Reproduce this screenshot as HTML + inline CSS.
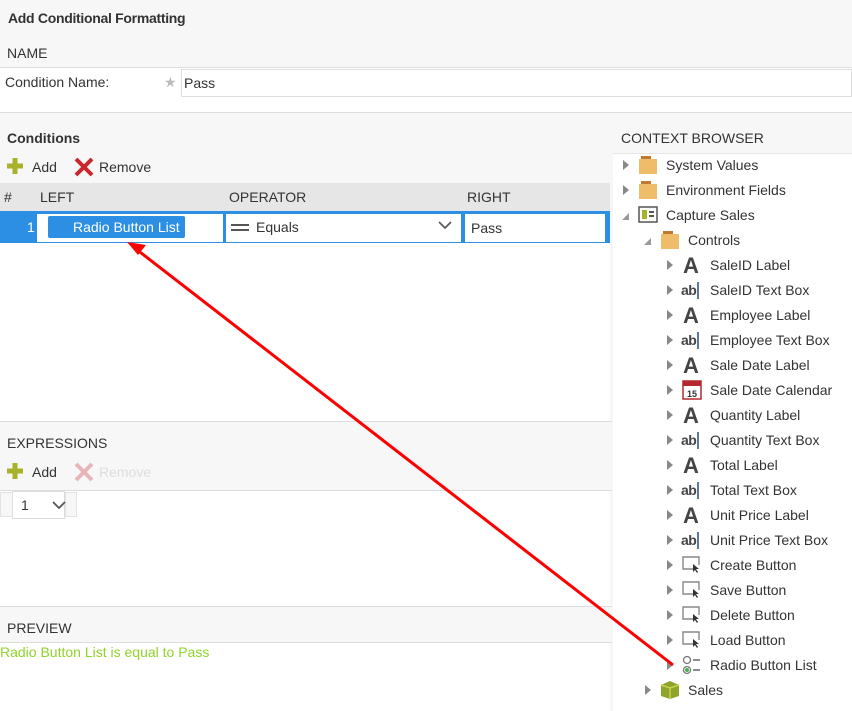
<!DOCTYPE html><html><head><style>
*{margin:0;padding:0;box-sizing:border-box}
body{width:852px;height:711px;position:relative;overflow:hidden;background:#f7f7f7;font-family:"Liberation Sans",sans-serif;font-size:14px;color:#333}
.a{position:absolute;white-space:nowrap}
.w{position:absolute;background:#fff}
.ln{position:absolute;height:1px;background:#ddd}
.t{position:absolute;font-size:14px;color:#333;white-space:nowrap}
.ar{position:absolute;width:0;height:0;border-top:5px solid transparent;border-bottom:5px solid transparent;border-left:6px solid #888}
</style></head><body>
<div class="a" style="left:8px;top:10px;font-weight:bold;font-size:14px;letter-spacing:-0.3px">Add Conditional Formatting</div>
<div class="a" style="left:7px;top:45px">NAME</div>
<div class="ln" style="left:0;top:67px;width:852px"></div>
<div class="w" style="left:0;top:68px;width:852px;height:44px"></div>
<div class="a" style="left:5px;top:74px">Condition Name:</div>
<div class="a" style="left:164px;top:74px;color:#bbb">★</div>
<div class="w" style="left:181px;top:69px;width:671px;height:28px;border:1px solid #ddd"></div>
<div class="a" style="left:184px;top:75px">Pass</div>
<div class="ln" style="left:0;top:112px;width:852px"></div>
<div class="a" style="left:7px;top:130px;font-weight:bold">Conditions</div>
<svg class="a" style="left:6px;top:157px" width="18" height="18"><path d="M9 1v16M1 9h16" stroke="#a8b22a" stroke-width="5"/></svg>
<div class="a" style="left:32px;top:159px">Add</div>
<svg class="a" style="left:74px;top:157px" width="20" height="20"><path d="M2 2l16 16M18 2L2 18" stroke="#c8282d" stroke-width="4"/></svg>
<div class="a" style="left:99px;top:159px">Remove</div>
<div class="a" style="left:0;top:183px;width:610px;height:28px;background:#e6e6e6"></div>
<div class="a" style="left:4px;top:189px">#</div>
<div class="a" style="left:40px;top:189px">LEFT</div>
<div class="a" style="left:229px;top:189px">OPERATOR</div>
<div class="a" style="left:467px;top:189px">RIGHT</div>
<div class="w" style="left:0;top:211px;width:610px;height:210px"></div>
<div class="a" style="left:0;top:211px;width:610px;height:32px;background:#2c8fe4"></div>
<div class="a" style="left:27px;top:219px;color:#fff">1</div>
<div class="w" style="left:37px;top:214px;width:186px;height:28px"></div>
<div class="a" style="left:48px;top:216px;width:137px;height:22px;background:#2c8fe4;border-radius:2px"></div>
<div class="a" style="left:73px;top:219px;color:#fff">Radio Button List</div>
<div class="w" style="left:226px;top:214px;width:235px;height:28px"></div>
<div class="a" style="left:231px;top:224px;width:18px;height:2px;background:#555"></div>
<div class="a" style="left:231px;top:229px;width:18px;height:2px;background:#555"></div>
<div class="a" style="left:256px;top:219px">Equals</div>
<svg class="a" style="left:438px;top:220px" width="14" height="10"><path d="M1 2l6 6 6-6" stroke="#555" stroke-width="1.6" fill="none"/></svg>
<div class="w" style="left:465px;top:214px;width:140px;height:28px"></div>
<div class="a" style="left:471px;top:220px">Pass</div>
<div class="ln" style="left:0;top:421px;width:612px"></div>
<div class="a" style="left:7px;top:435px">EXPRESSIONS</div>
<svg class="a" style="left:6px;top:462px" width="18" height="18"><path d="M9 1v16M1 9h16" stroke="#a8b22a" stroke-width="5"/></svg>
<div class="a" style="left:32px;top:464px">Add</div>
<svg class="a" style="left:74px;top:462px" width="20" height="20"><path d="M2 2l16 16M18 2L2 18" stroke="#e8b5b7" stroke-width="4"/></svg>
<div class="a" style="left:99px;top:464px;color:#ddd">Remove</div>
<div class="ln" style="left:0;top:490px;width:612px"></div>
<div class="w" style="left:0;top:491px;width:610px;height:115px"></div>
<div class="a" style="left:0;top:492px;width:14px;height:25px;background:#f7f7f7;border:1px solid #e3e3e3"></div>
<div class="a" style="left:65px;top:492px;width:12px;height:25px;background:#f7f7f7;border:1px solid #e3e3e3"></div>
<div class="w" style="left:12px;top:491px;width:53px;height:28px;border:1px solid #ddd"></div>
<div class="a" style="left:21px;top:497px">1</div>
<svg class="a" style="left:52px;top:500px" width="14" height="10"><path d="M1 2l6 6 6-6" stroke="#555" stroke-width="1.8" fill="none"/></svg>
<div class="ln" style="left:0;top:606px;width:612px"></div>
<div class="a" style="left:7px;top:620px">PREVIEW</div>
<div class="ln" style="left:0;top:642px;width:612px"></div>
<div class="w" style="left:0;top:643px;width:610px;height:68px"></div>
<div class="a" style="left:0;top:644px;color:#8ed42a">Radio Button List is equal to Pass</div>
<div class="a" style="left:621px;top:130px">CONTEXT BROWSER</div>
<div class="w" style="left:613px;top:153px;width:239px;height:558px;border-top:1px solid #e6e6e6"></div>
<div id="tree"></div>
<svg class="a" style="left:0;top:0" width="852" height="711">
<line x1="673" y1="665" x2="136" y2="249" stroke="#f00" stroke-width="3"/>
<path d="M127 242l19 3-8 10z" fill="#f00"/>
</svg>
<script>
var items=[[0,'f','System Values'],[0,'f','Environment Fields'],[0,'v','Capture Sales',1],[1,'f','Controls',1],
[2,'A','SaleID Label'],[2,'ab','SaleID Text Box'],[2,'A','Employee Label'],[2,'ab','Employee Text Box'],[2,'A','Sale Date Label'],[2,'c','Sale Date Calendar'],[2,'A','Quantity Label'],[2,'ab','Quantity Text Box'],[2,'A','Total Label'],[2,'ab','Total Text Box'],[2,'A','Unit Price Label'],[2,'ab','Unit Price Text Box'],[2,'b','Create Button'],[2,'b','Save Button'],[2,'b','Delete Button'],[2,'b','Load Button'],[2,'r','Radio Button List'],[1,'s','Sales']];
var h='';items.forEach(function(it,i){var y=165+i*25,x=622+it[0]*22;
if(it[3])h+='<div class="a" style="left:'+(x)+'px;top:'+(y-4)+'px;width:0;height:0;border-left:7px solid transparent;border-bottom:7px solid #999;top:'+(y-2)+'px"></div>';
else h+='<div class="ar" style="left:'+(x+1)+'px;top:'+(y-5)+'px"></div>';
var ix=x+16,ic='';
if(it[1]=='f')ic='<svg class="a" style="left:'+ix+'px;top:'+(y-10)+'px" width="20" height="20"><rect x="3" y="1" width="10" height="4" fill="#c07a30"/><rect x="1" y="4" width="18" height="15" fill="#efbc6a"/></svg>';
if(it[1]=='v')ic='<svg class="a" style="left:'+ix+'px;top:'+(y-9)+'px" width="20" height="17"><rect x="1" y="1" width="18" height="15" fill="#fff" stroke="#555" stroke-width="1.5"/><rect x="4" y="4" width="5" height="9" fill="#a8b22a"/><path d="M11 6h5M11 10h5" stroke="#555" stroke-width="2"/></svg>';
if(it[1]=='A')ic='<div class="a" style="left:'+(ix+1)+'px;top:'+(y-12)+'px;font-size:22px;font-weight:bold;color:#444">A</div>';
if(it[1]=='ab')ic='<div class="a" style="left:'+(ix-1)+'px;top:'+(y-8)+'px;font-size:14px;font-weight:bold;color:#444;letter-spacing:-0.5px">ab<span style="display:inline-block;width:2px;height:17px;background:#5a7a9a;vertical-align:-4px;margin-left:1px"></span></div>';
if(it[1]=='c')ic='<svg class="a" style="left:'+ix+'px;top:'+(y-10)+'px" width="20" height="20"><rect x="1" y="1" width="18" height="18" fill="#fff" stroke="#b5282d" stroke-width="1.5"/><rect x="1" y="1" width="18" height="5" fill="#b5282d"/><text x="10" y="17" font-size="9" font-weight="bold" text-anchor="middle" fill="#333" font-family="Liberation Sans">15</text></svg>';
if(it[1]=='b')ic='<svg class="a" style="left:'+ix+'px;top:'+(y-9)+'px" width="20" height="18"><path d="M12 13H1V1h16v8" fill="none" stroke="#888" stroke-width="1.4"/><path d="M11 8l6 5-3 0 2 3-1 1-2-3-2 2z" fill="#333"/></svg>';
if(it[1]=='r')ic='<svg class="a" style="left:'+ix+'px;top:'+(y-10)+'px" width="20" height="20"><circle cx="5" cy="5" r="3.5" fill="none" stroke="#777" stroke-width="1.3"/><circle cx="5" cy="15" r="3.5" fill="#fff" stroke="#777" stroke-width="1.3"/><circle cx="5" cy="15" r="2" fill="#4caf50"/><path d="M11 5h7M11 15h7" stroke="#666" stroke-width="1.5"/></svg>';
if(it[1]=='s')ic='<svg class="a" style="left:'+ix+'px;top:'+(y-10)+'px" width="20" height="20"><path d="M10 1l9 4v11l-9 3-9-3V5z" fill="#8fa42a"/><path d="M1 5l9 3 9-3M10 8v11" stroke="#c8d24a" stroke-width="1.5" fill="none"/></svg>';
h+=ic+'<div class="t" style="left:'+(ix+28)+'px;top:'+(y-8)+'px">'+it[2]+'</div>';});
document.getElementById('tree').innerHTML=h;
</script>
</body></html>
